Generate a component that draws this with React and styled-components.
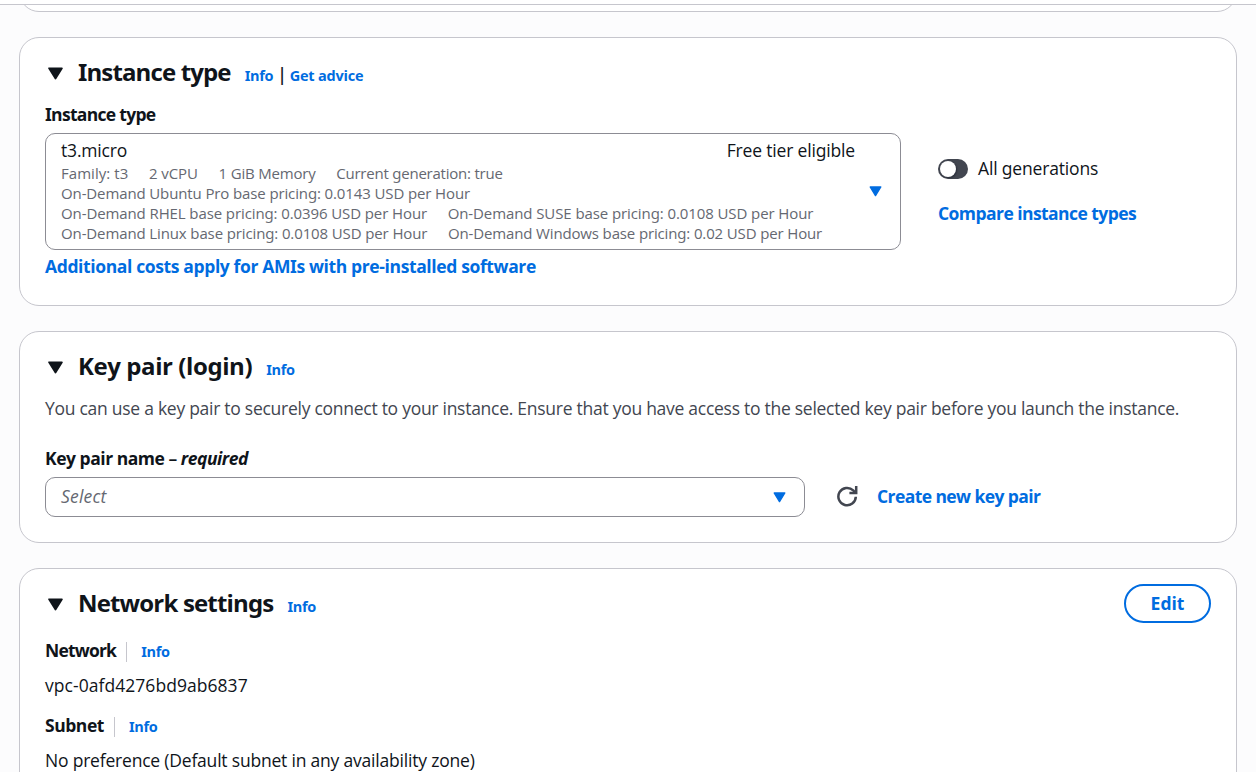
import React from 'react';
import styled, { createGlobalStyle } from 'styled-components';

const Global = createGlobalStyle`
  * { box-sizing: border-box; }
  html, body { margin: 0; height: 772px; overflow: hidden; background: #fcfcfd; }
  body {
    font-family: "Open Sans", "Noto Sans", sans-serif;
    font-feature-settings: "ss01";
    font-size: 17.5px;
    line-height: 25px;
    letter-spacing: -0.17px;
    color: #0f141a;
  }
`;

const Page = styled.main`
  display: flex;
  flex-direction: column;
  height: 772px;
  overflow: hidden;
`;
const TopBar = styled.div`
  flex: none;
  height: 5px;
  background: #fff;
  border-bottom: 1px solid #c6c6cd;
`;
const Scroller = styled.div`
  flex: 1;
  min-height: 0;
  overflow: hidden;
  display: flex;
  flex-direction: column;
  gap: 25px;
  padding: 0 19px;
`;
const Card = styled.section`
  flex: none;
  height: ${p => p.$h}px;
  background: #fff;
  border: 1px solid #c6c6cd;
  border-radius: 20px;
  padding: 15px 25px;
`;
const PreviousCard = styled(Card)`
  margin-top: -33px;
`;
const Header = styled.header`
  display: flex;
  align-items: center;
  height: 39px;
  padding-left: 3px;
  margin-bottom: ${p => p.$gap || 10}px;
`;
const TitleGroup = styled.div`
  flex: 1;
  display: flex;
  align-items: baseline;
  margin-left: 14px;
`;
const Title = styled.h2`
  margin: 0 14px 0 0;
  font-size: 24px;
  line-height: 30px;
  font-weight: 700;
  letter-spacing: ${p => p.$spacing}px;
`;
const Bar = styled.span`
  margin: 0 3px 0 4px;
  font-weight: 600;
`;
const Link = styled.a`
  color: #006ce0;
  font-weight: 700;
  font-size: 17.5px;
  letter-spacing: ${p => p.$spacing || -0.375}px;
`;
const SmallLink = styled(Link)`
  font-size: 14.5px;
  letter-spacing: ${p => p.$spacing || -0.3}px;
`;
const Label = styled.div`
  font-weight: 700;
  letter-spacing: ${p => p.$spacing}px;
  margin-bottom: 6px;
`;
const Dash = styled.span`
  font-weight: 600;
`;
const Columns = styled.div`
  display: flex;
  gap: 37px;
`;
const Field = styled.div`
  flex: none;
  width: 856px;
`;
const SelectBox = styled.div`
  display: flex;
  align-items: center;
  height: ${p => p.$h}px;
  width: ${p => p.$w}px;
  border: 1px solid #8c8c94;
  border-radius: 10px;
  padding: 0 18px 0 15px;
`;
const Option = styled.div`
  flex: 1;
  padding: 0 14px 3px 0;
`;
const OptionHead = styled.div`
  display: flex;
  justify-content: space-between;
  height: 25px;
`;
const Detail = styled.div`
  display: flex;
  gap: 20.6px;
  font-size: 15px;
  line-height: 20px;
  color: #656871;
`;
const DetailItem = styled.span`
  letter-spacing: ${p => p.$spacing}px;
`;
const Placeholder = styled.i`
  flex: 1;
  padding-bottom: 2px;
  letter-spacing: 0.2px;
  color: #656871;
`;
const Side = styled.div`
  display: flex;
  flex-direction: column;
  gap: 20px;
  padding-top: 54px;
`;
const ToggleRow = styled.div`
  display: flex;
  align-items: center;
  gap: 10px;
`;
const Toggle = styled.span`
  width: 30px;
  height: 20px;
  border-radius: 10px;
  background: #424650;
  padding: 2px;
  &::before {
    content: "";
    display: block;
    width: 16px;
    height: 16px;
    border-radius: 50%;
    background: #fff;
    box-shadow: 1px 1px 2px rgba(0, 7, 22, 0.4);
  }
`;
const CostLink = styled.div`
  padding-top: 4px;
`;
const Description = styled.p`
  margin: 0 0 25px;
  white-space: nowrap;
  letter-spacing: -0.27px;
  color: #424650;
`;
const KeyRow = styled.div`
  display: flex;
  align-items: center;
`;
const RefreshIcon = styled.svg`
  margin: 0 19px 1px 32px;
`;
const CreateLink = styled(Link)`
  padding-bottom: 1px;
`;
const Button = styled.button`
  width: 87px;
  height: 39px;
  border: 2px solid #006ce0;
  border-radius: 20px;
  background: #fff;
  color: #006ce0;
  font: inherit;
  font-weight: 700;
  padding: 0;
`;
const Term = styled.div`
  display: flex;
  align-items: center;
  height: 25px;
  font-weight: 700;
  letter-spacing: ${p => p.$spacing}px;
`;
const TermLink = styled(SmallLink)`
  padding-top: 2px;
`;
const Divider = styled.span`
  width: 1px;
  height: 20px;
  margin: 2px 14px 0 10px;
  background: #c6c6cd;
`;
const Value = styled.div`
  margin: 10px 0 15px;
  letter-spacing: ${p => p.$spacing}px;
`;
const HeaderCaret = styled.svg`
  margin-top: 2px;
`;

const SelectCaret = () => (
  <svg width="13" height="11" viewBox="0 0 13 11">
    <path d="M1.2 1h10.6L6.5 9.6z" fill="#006ce0" stroke="#006ce0" strokeWidth="1.4" strokeLinejoin="round" />
  </svg>
);
const SectionHeader = ({ title, spacing, gap, children, action }) => (
  <Header $gap={gap}>
    <HeaderCaret width="16" height="13" viewBox="0 0 16 13">
      <path d="M1.1 1.3h12.8L7.5 11.6z" fill="#0f141a" stroke="#0f141a" strokeWidth="1.8" strokeLinejoin="round" />
    </HeaderCaret>
    <TitleGroup><Title $spacing={spacing}>{title}</Title>{children}</TitleGroup>
    {action}
  </Header>
);
const details = [
  [['Family: t3', 0.05], ['2 vCPU', -0.05], ['1 GiB Memory', -0.18], ['Current generation: true', -0.22]],
  [['On-Demand Ubuntu Pro base pricing: 0.0143 USD per Hour', -0.12]],
  [['On-Demand RHEL base pricing: 0.0396 USD per Hour', -0.1], ['On-Demand SUSE base pricing: 0.0108 USD per Hour', -0.09]],
  [['On-Demand Linux base pricing: 0.0108 USD per Hour', -0.12], ['On-Demand Windows base pricing: 0.02 USD per Hour', -0.14]],
];

export default function App() {
  return (
    <>
      <Global />
      <Page>
        <TopBar />
        <Scroller>
          <PreviousCard $h={40} />
          <Card $h={269}>
            <SectionHeader title="Instance type" spacing={-0.87}>
              <SmallLink>Info</SmallLink><Bar>|</Bar><SmallLink $spacing={-0.22}>Get advice</SmallLink>
            </SectionHeader>
            <Columns>
              <Field>
                <Label $spacing={-0.7}>Instance type</Label>
                <SelectBox $h={117} $w={856}>
                  <Option>
                    <OptionHead><span>t3.micro</span><span>Free tier eligible</span></OptionHead>
                    {details.map((line, i) => (
                      <Detail key={i}>
                        {line.map(([text, spacing]) => <DetailItem key={text} $spacing={spacing}>{text}</DetailItem>)}
                      </Detail>
                    ))}
                  </Option>
                  <SelectCaret />
                </SelectBox>
                <CostLink><Link>Additional costs apply for AMIs with pre-installed software</Link></CostLink>
              </Field>
              <Side>
                <ToggleRow><Toggle />All generations</ToggleRow>
                <Link $spacing={-0.56}>Compare instance types</Link>
              </Side>
            </Columns>
          </Card>
          <Card $h={212}>
            <SectionHeader title="Key pair (login)" spacing={-0.42}><SmallLink>Info</SmallLink></SectionHeader>
            <Description>You can use a key pair to securely connect to your instance. Ensure that you have access to the selected key pair before you launch the instance.</Description>
            <Label $spacing={-0.47}>Key pair name <Dash>–</Dash> <i>required</i></Label>
            <KeyRow>
              <SelectBox $h={40} $w={760}><Placeholder>Select</Placeholder><SelectCaret /></SelectBox>
              <RefreshIcon width="21" height="21" viewBox="0 0 21 21" fill="none" stroke="#424650" strokeWidth="2.5">
                <path d="M18.8 10.8a8.7 8.7 0 1 1-2.6-6.4l2.3 2.2" />
                <path d="M19.2 0v7h-6.8" />
              </RefreshIcon>
              <CreateLink $spacing={-0.58}>Create new key pair</CreateLink>
            </KeyRow>
          </Card>
          <Card $h={300}>
            <SectionHeader title="Network settings" spacing={-0.83} gap={15} action={<Button>Edit</Button>}><SmallLink>Info</SmallLink></SectionHeader>
            <Term $spacing={-0.8}>Network<Divider /><TermLink>Info</TermLink></Term>
            <Value $spacing={0.05}>vpc-0afd4276bd9ab6837</Value>
            <Term $spacing={-0.45}>Subnet<Divider /><TermLink>Info</TermLink></Term>
            <Value $spacing={-0.2}>No preference (Default subnet in any availability zone)</Value>
          </Card>
        </Scroller>
      </Page>
    </>
  );
}
